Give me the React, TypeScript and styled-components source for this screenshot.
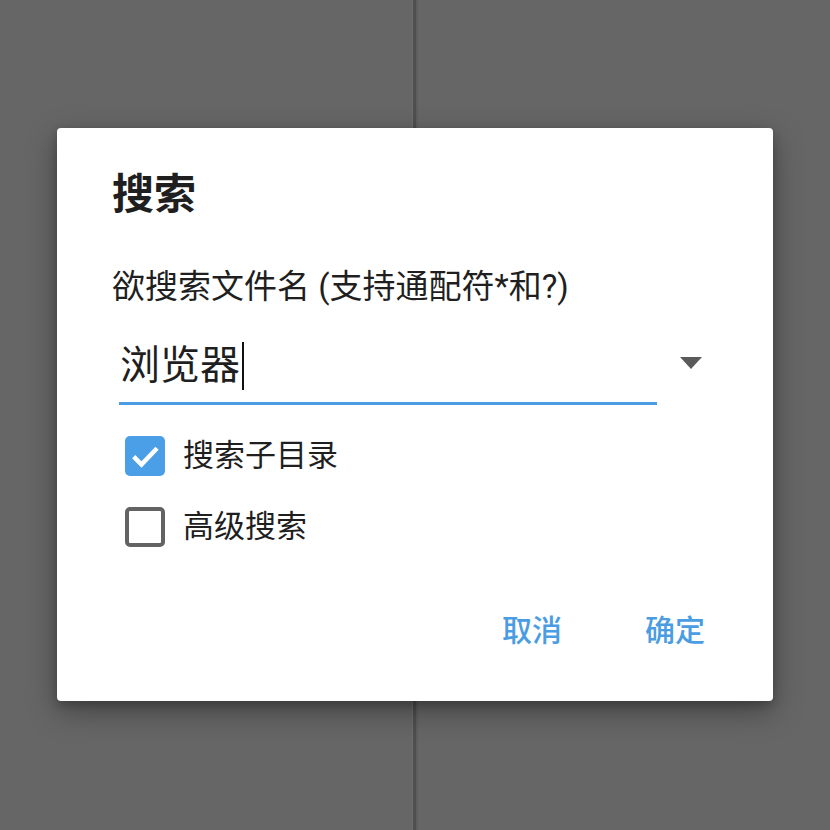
import styled, { createGlobalStyle } from "styled-components";

const GlobalStyle = createGlobalStyle`
    html, body {
        margin: 0;
        padding: 0;
        background: #666666;
    }
    * {
        box-sizing: border-box;
    }
`;

const Screen = styled.div`
    position: relative;
    width: 830px;
    height: 830px;
    display: flex;
    background: #666666;
    overflow: hidden;
`;

const Pane = styled.div`
    flex: 1;
    background: #666666;
`;

const Splitter = styled.div`
    width: 6px;
    border-left: 1px solid #6e6e6e;
    border-right: 2px solid #5e5e5e;
    background: #4f4f4f;
`;

const Overlay = styled.div`
    position: absolute;
    inset: 0;
    display: flex;
    align-items: center;
    justify-content: center;
`;

const Dialog = styled.div`
    width: 716px;
    height: 573px;
    margin-top: -2px;
    background: #ffffff;
    border-radius: 4px;
    box-shadow: 0 10px 30px rgba(0, 0, 0, 0.35), 0 4px 10px rgba(0, 0, 0, 0.2);
    padding: 39px 68px 0 55px;
    display: flex;
    flex-direction: column;
    font-family: "Roboto", "Noto Sans CJK SC", sans-serif;
    color: #1f1f1f;
`;

const Title = styled.h1`
    margin: 0;
    font-size: 42px;
    line-height: 56px;
    font-weight: 700;
`;

const Label = styled.div`
    margin-top: 44px;
    font-size: 33px;
    line-height: 40px;
`;

const InputRow = styled.div`
    display: flex;
    align-items: center;
    margin-top: 28px;
    margin-left: 7px;
`;

const Field = styled.div`
    width: 538px;
    height: 70px;
    border-bottom: 3px solid #4a9de2;
    display: flex;
    align-items: flex-start;
    padding: 7px 0 0 1px;
    font-size: 40px;
    line-height: 48px;
`;

const Caret = styled.span`
    display: inline-block;
    width: 2px;
    height: 48px;
    margin-left: 2px;
    background: #111111;
`;

const Arrow = styled.div`
    margin-left: 23px;
    margin-top: -14px;
    width: 0;
    height: 0;
    border-left: 11px solid transparent;
    border-right: 11px solid transparent;
    border-top: 12px solid #5a5a5a;
`;

const Options = styled.div`
    display: flex;
    flex-direction: column;
    gap: 31px;
    margin-top: 31px;
    margin-left: 13px;
`;

const Option = styled.label`
    display: flex;
    align-items: center;
    gap: 18px;
    font-size: 31px;
    line-height: 40px;
`;

const Box = styled.span<{ checked: boolean }>`
    width: 40px;
    height: 40px;
    border-radius: 5px;
    display: flex;
    align-items: center;
    justify-content: center;
    background: ${props => props.checked ? '#4a9fe6' : '#ffffff'};
    border: ${props => props.checked ? 'none' : '4px solid #636363'};
`;

const Actions = styled.div`
    display: flex;
    justify-content: flex-end;
    gap: 83px;
    margin-top: auto;
    margin-bottom: 50px;
`;

const ActionButton = styled.button`
    border: none;
    background: none;
    padding: 0;
    font-family: inherit;
    font-size: 30px;
    line-height: 40px;
    font-weight: 500;
    color: #4a9de2;
    cursor: pointer;
`;

const Checkbox = ({ checked }: { checked: boolean }) => (
    <Box checked={checked}>
        {checked && (
            <svg width="34" height="34" viewBox="0 0 24 24">
                <path d="M4 12.5 L9.5 18 L20.5 6.5" fill="none" stroke="#ffffff" strokeWidth="3.2" />
            </svg>
        )}
    </Box>
);

export default function App() {
    return (
        <>
            <GlobalStyle />
            <Screen>
                <Pane />
                <Splitter />
                <Pane />
                <Overlay>
                    <Dialog>
                        <Title>搜索</Title>
                        <Label>欲搜索文件名 (支持通配符*和?)</Label>
                        <InputRow>
                            <Field>
                                浏览器<Caret />
                            </Field>
                            <Arrow />
                        </InputRow>
                        <Options>
                            <Option>
                                <Checkbox checked={true} />
                                搜索子目录
                            </Option>
                            <Option>
                                <Checkbox checked={false} />
                                高级搜索
                            </Option>
                        </Options>
                        <Actions>
                            <ActionButton>取消</ActionButton>
                            <ActionButton>确定</ActionButton>
                        </Actions>
                    </Dialog>
                </Overlay>
            </Screen>
        </>
    );
}
